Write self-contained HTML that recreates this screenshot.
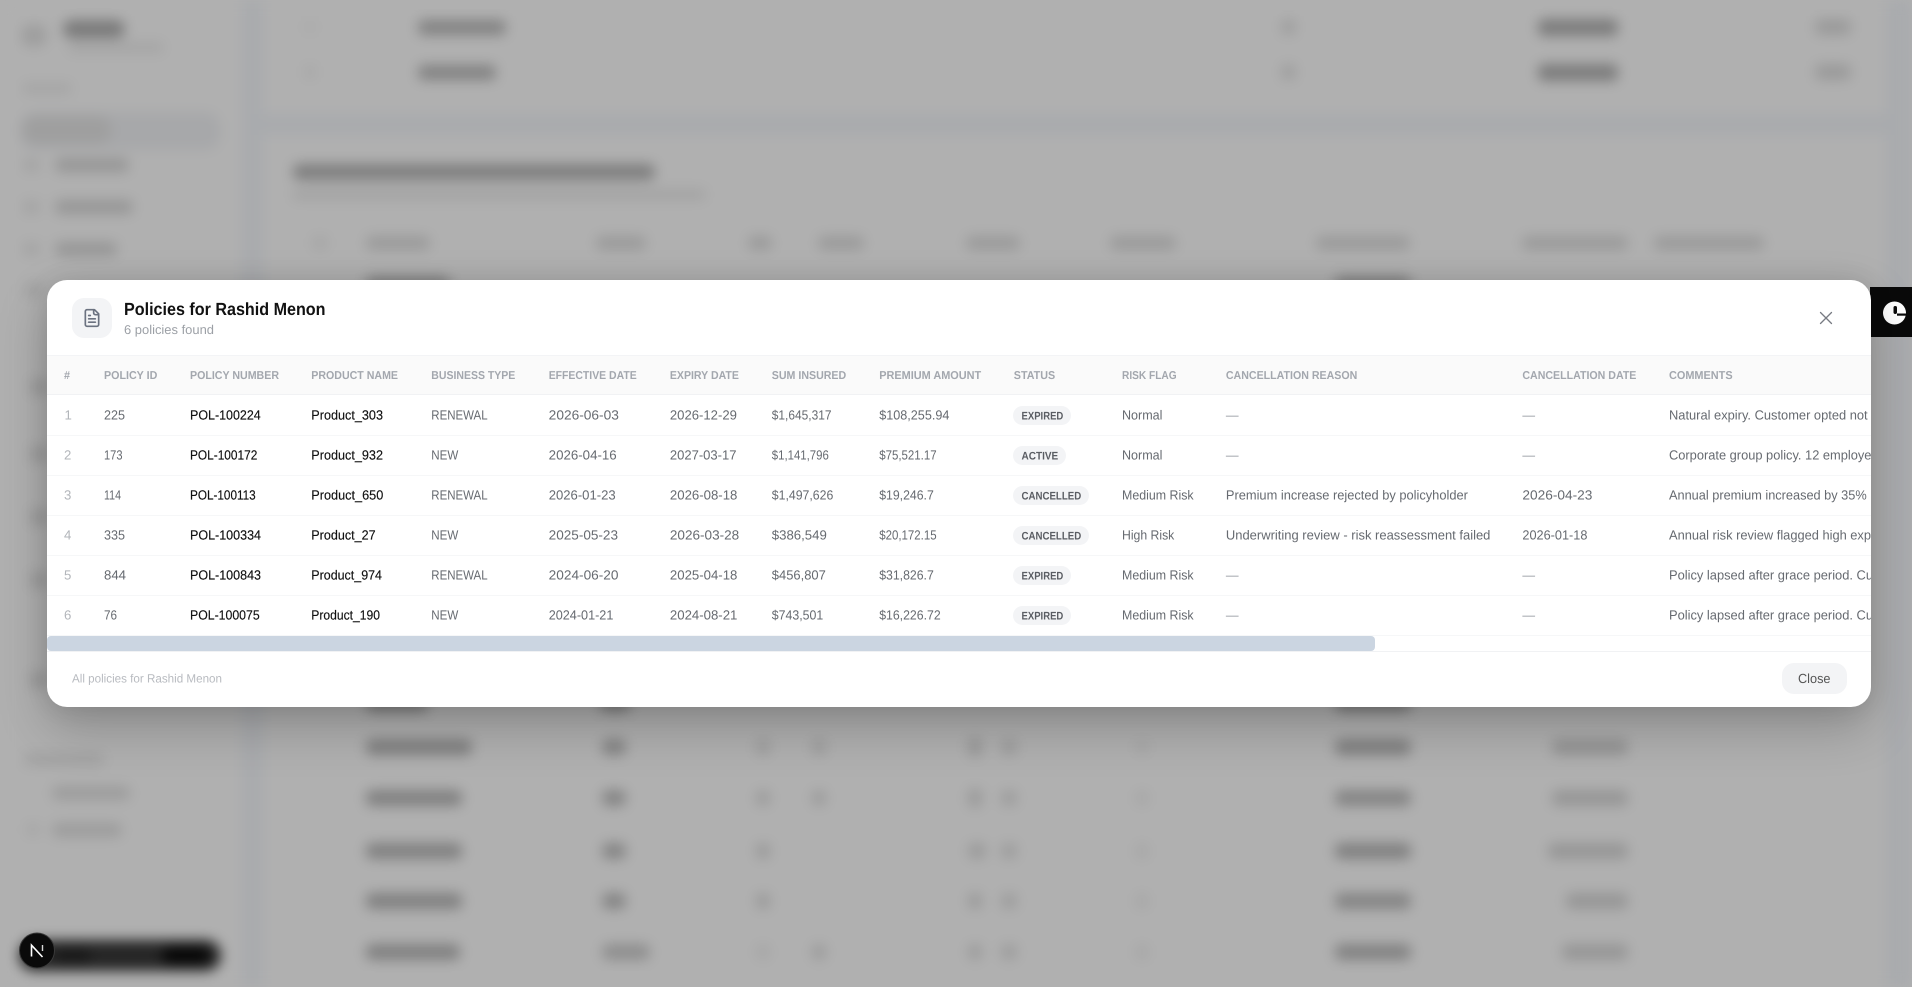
<!DOCTYPE html>
<html lang="en">
<head>
<meta charset="utf-8">
<title>Policies for Rashid Menon</title>
<style>
html,body{margin:0;padding:0;width:1912px;height:987px;overflow:hidden;background:#b0b0b0;font-family:"Liberation Sans",sans-serif}
.bgwrap{position:absolute;left:0;top:0;width:1912px;height:987px;overflow:hidden;background:#b0b0b0}
.bg{position:absolute;left:0;top:0;width:1912px;height:987px;filter:blur(6.5px)}
.tab{position:absolute;left:1870px;top:287px;width:42px;height:50px;background:#0a0a0a}
.modal{position:absolute;left:47px;top:280px;width:1824px;height:427px;background:#fff;border-radius:20px;overflow:hidden;box-shadow:0 20px 50px rgba(0,0,0,.22),0 0 24px rgba(0,0,0,.1)}
.ico{position:absolute;left:25px;top:18px;width:40px;height:40px;border-radius:12px;background:#f3f4f6}
.thead{position:absolute;left:0;top:75px;width:1824px;height:40px;background:#fafafa;box-sizing:border-box;border-top:1px solid #f3f4f6;border-bottom:1px solid #f1f2f4}
.line{position:absolute;left:0;width:1824px;height:1px;background:#f6f7f8}
.thumb{position:absolute;left:0;top:356px;width:1328px;height:15px;background:#cbd5e1;border-radius:4px}
.foot{position:absolute;left:0;top:371px;width:1824px;height:1px;background:#f1f2f4}
.btn{position:absolute;left:1734.500px;top:383px;width:65px;height:31px;background:#f3f4f6;border-radius:12px}
.pill{position:absolute;height:19px;border-radius:10px;background:#f3f4f6}
svg.txt{position:absolute;left:0;top:0;width:1912px;height:987px}
text{font-family:"Liberation Sans",sans-serif;text-rendering:geometricPrecision}
.h{font-size:11.4px;font-weight:700;fill:#a3a7ae}
.n{font-size:13.2px;fill:#b2b5ba}
.g{font-size:13.2px;fill:#666a70}
.k{font-size:13.2px;fill:#111;stroke:#111;stroke-width:.15px}
.d{font-size:13.2px;fill:#9a9da3}
.b{font-size:11px;font-weight:700;fill:#5a5d63}
</style>
</head>
<body>
<div class="bgwrap">
<svg class="bg" viewBox="0 0 1912 987" xmlns="http://www.w3.org/2000/svg">
  <rect x="-30" y="-30" width="1972" height="1047" fill="#b0b0b0"/>
  <rect x="242" y="-30" width="21" height="1047" fill="#a9abae"/>
  <rect x="1886" y="-30" width="56" height="1047" fill="#a9abae"/>
  <rect x="263" y="114" width="1623" height="21" fill="#a9abae"/>
  <g fill="#9e9e9e">
    <rect x="21" y="24" width="26" height="23" rx="11"/>
    <rect x="63" y="20" width="62" height="18" rx="9" fill="#7a7a7a"/>
    <rect x="68" y="42" width="96" height="11" rx="5" fill="#a5a5a5"/>
    <rect x="22" y="83" width="50" height="11" rx="5" fill="#a5a5a5"/>
    <rect x="20" y="112" width="200" height="38" rx="14" fill="#a7a8aa"/>
    <rect x="22" y="116" width="90" height="28" rx="14" fill="#9f9f9f"/>
    <rect x="23" y="158" width="17" height="14" rx="5" fill="#a4a4a4"/>
    <rect x="55" y="158" width="74" height="14" rx="6" fill="#969696"/>
    <rect x="23" y="200" width="17" height="14" rx="5" fill="#a4a4a4"/>
    <rect x="55" y="200" width="78" height="14" rx="6" fill="#969696"/>
    <rect x="23" y="242" width="17" height="14" rx="5" fill="#a4a4a4"/>
    <rect x="55" y="242" width="62" height="14" rx="6" fill="#969696"/>
    <rect x="25" y="283" width="18" height="14" rx="6" fill="#a0a0a0"/>
    <rect x="30" y="378" width="18" height="18" rx="8" fill="#9c9c9c"/>
    <rect x="30" y="445" width="18" height="18" rx="8" fill="#9c9c9c"/>
    <rect x="30" y="508" width="18" height="18" rx="8" fill="#9c9c9c"/>
    <rect x="30" y="571" width="18" height="18" rx="8" fill="#9c9c9c"/>
    <rect x="30" y="671" width="18" height="18" rx="8" fill="#9c9c9c"/>
    <rect x="24" y="753" width="80" height="13" rx="5" fill="#a2a2a2"/>
    <rect x="52" y="786" width="78" height="14" rx="6" fill="#9c9c9c"/>
    <rect x="26" y="823" width="14" height="13" rx="5" fill="#a6a6a6"/>
    <rect x="52" y="823" width="70" height="14" rx="6" fill="#9c9c9c"/>
  </g>
  <rect x="19" y="940" width="202" height="31" rx="15" fill="#262626"/>
  <rect x="162" y="946" width="48" height="19" rx="9" fill="#080808"/>
  <rect x="55" y="948" width="36" height="16" rx="8" fill="#1a1a1a"/>
  <g fill="#828282">
    <rect x="418" y="20" width="88" height="15" rx="6"/><rect x="418" y="65" width="78" height="15" rx="6"/>
    <rect x="1281" y="19" width="15" height="16" rx="7" fill="#9e9e9e"/><rect x="1281" y="64" width="15" height="16" rx="7" fill="#9e9e9e"/>
    <rect x="1538" y="19" width="80" height="17" rx="6" fill="#7c7c7c"/><rect x="1538" y="64" width="80" height="17" rx="6" fill="#7c7c7c"/>
    <rect x="1815" y="19" width="36" height="16" rx="6" fill="#9a9a9a"/><rect x="1815" y="64" width="36" height="16" rx="6" fill="#9a9a9a"/>
    <rect x="305" y="20" width="10" height="14" rx="5" fill="#aaa"/><rect x="305" y="65" width="10" height="14" rx="5" fill="#a6a6a6"/>
    <rect x="293" y="164" width="362" height="16" rx="7" fill="#7e7e7e"/>
    <rect x="292" y="189" width="414" height="11" rx="5" fill="#a3a3a3"/>
  </g>
  <g fill="#9a9a9a">
    <rect x="312" y="236" width="16" height="14" rx="6" fill="#a6a6a6"/>
    <rect x="366" y="236" width="64" height="14" rx="6"/>
    <rect x="596" y="236" width="50" height="14" rx="6"/>
    <rect x="748" y="236" width="24" height="14" rx="6"/>
    <rect x="818" y="236" width="46" height="14" rx="6"/>
    <rect x="966" y="236" width="54" height="14" rx="6"/>
    <rect x="1110" y="236" width="66" height="14" rx="6"/>
    <rect x="1316" y="236" width="94" height="14" rx="6"/>
    <rect x="1522" y="236" width="106" height="14" rx="6"/>
    <rect x="1654" y="236" width="110" height="14" rx="6"/>
    <rect x="366" y="276" width="84" height="16" rx="6" fill="#848484"/>
    <rect x="1335" y="276" width="76" height="16" rx="6" fill="#848484"/>
  </g>
  <g id="rows">
    <rect x="366" y="696" width="62" height="16" rx="6" fill="#808080"/><rect x="600" y="696" width="30" height="16" rx="6" fill="#808080"/>
    <rect x="1335" y="696" width="76" height="16" rx="6" fill="#808080"/>
    <rect x="366" y="739" width="106" height="16" rx="6" fill="#808080"/><rect x="602" y="739" width="24" height="16" rx="7" fill="#848484"/><rect x="756" y="739" width="14" height="16" rx="7" fill="#9c9c9c"/><rect x="812" y="739" width="14" height="16" rx="7" fill="#9c9c9c"/><rect x="968" y="737" width="14" height="20" rx="7" fill="#989898"/><rect x="1001" y="739" width="16" height="16" rx="7" fill="#9c9c9c"/><rect x="1136" y="740" width="12" height="14" rx="6" fill="#a6a6a6"/><rect x="1335" y="739" width="76" height="16" rx="6" fill="#808080"/><rect x="1552" y="739" width="76" height="16" rx="6" fill="#949494"/>
    <rect x="366" y="790" width="96" height="16" rx="6" fill="#808080"/><rect x="602" y="790" width="24" height="16" rx="7" fill="#848484"/><rect x="756" y="790" width="14" height="16" rx="7" fill="#9a9a9a"/><rect x="812" y="790" width="14" height="16" rx="7" fill="#9a9a9a"/><rect x="968" y="788" width="14" height="20" rx="7" fill="#9a9a9a"/><rect x="1001" y="790" width="16" height="16" rx="7" fill="#9c9c9c"/><rect x="1136" y="790" width="12" height="16" rx="6" fill="#a6a6a6"/><rect x="1335" y="790" width="76" height="16" rx="6" fill="#848484"/><rect x="1552" y="790" width="76" height="16" rx="6" fill="#969696"/>
    <rect x="366" y="843" width="96" height="16" rx="6" fill="#808080"/><rect x="602" y="843" width="24" height="16" rx="7" fill="#848484"/><rect x="756" y="843" width="14" height="16" rx="7" fill="#989898"/><rect x="968" y="843" width="18" height="16" rx="7" fill="#9a9a9a"/><rect x="1001" y="843" width="16" height="16" rx="7" fill="#9c9c9c"/><rect x="1136" y="843" width="12" height="16" rx="6" fill="#a6a6a6"/><rect x="1335" y="843" width="76" height="16" rx="6" fill="#808080"/><rect x="1548" y="843" width="80" height="16" rx="6" fill="#969696"/>
    <rect x="366" y="893" width="96" height="16" rx="6" fill="#808080"/><rect x="602" y="893" width="24" height="16" rx="7" fill="#848484"/><rect x="756" y="893" width="14" height="16" rx="7" fill="#989898"/><rect x="968" y="893" width="14" height="16" rx="7" fill="#989898"/><rect x="1001" y="893" width="16" height="16" rx="7" fill="#9c9c9c"/><rect x="1136" y="893" width="12" height="16" rx="6" fill="#a6a6a6"/><rect x="1335" y="893" width="76" height="16" rx="6" fill="#848484"/><rect x="1566" y="893" width="62" height="16" rx="6" fill="#969696"/>
    <rect x="366" y="944" width="94" height="16" rx="6" fill="#808080"/><rect x="602" y="944" width="48" height="16" rx="7" fill="#8e8e8e"/><rect x="756" y="944" width="14" height="16" rx="7" fill="#a6a6a6"/><rect x="812" y="944" width="14" height="16" rx="7" fill="#9a9a9a"/><rect x="968" y="944" width="14" height="16" rx="7" fill="#9a9a9a"/><rect x="1001" y="944" width="16" height="16" rx="7" fill="#9c9c9c"/><rect x="1136" y="944" width="12" height="16" rx="6" fill="#a6a6a6"/><rect x="1335" y="944" width="76" height="16" rx="6" fill="#828282"/><rect x="1562" y="944" width="66" height="16" rx="6" fill="#969696"/>
  </g>
</svg>
</div>

<svg style="position:absolute;left:19px;top:932px" width="37" height="37" viewBox="0 0 37 37" xmlns="http://www.w3.org/2000/svg">
  <circle cx="18" cy="18.500" r="17.500" fill="#0a0a0a" stroke="#3a3a3a" stroke-width="1"/>
  <path d="M12.500 24.500V13.200L23.500 25" fill="none" stroke="#fff" stroke-width="1.600"/>
  <path d="M23.500 13V19" fill="none" stroke="#d8d8d8" stroke-width="1.400"/>
</svg>

<div class="tab">
  <svg width="42" height="50" viewBox="0 0 42 50" xmlns="http://www.w3.org/2000/svg">
    <circle cx="24.500" cy="26" r="11.500" fill="#fff"/>
    <rect x="23.500" y="19" width="3.500" height="8" rx="1.700" fill="#0a0a0a"/>
    <rect x="27" y="26.500" width="10" height="2.200" fill="#0a0a0a"/>
  </svg>
</div>

<div class="modal">
  <div class="ico"></div>
  <div class="thead"></div>
  <div class="line" style="top:155px"></div>
  <div class="line" style="top:195px"></div>
  <div class="line" style="top:235px"></div>
  <div class="line" style="top:275px"></div>
  <div class="line" style="top:315px"></div>
  <div class="line" style="top:355px"></div>
  <div class="thumb"></div>
  <div class="foot"></div>
  <div class="btn"></div>
  <div class="pill" style="left:966px;top:126px;width:58px"></div>
  <div class="pill" style="left:966px;top:166px;width:53px"></div>
  <div class="pill" style="left:966px;top:206px;width:76px"></div>
  <div class="pill" style="left:966px;top:246px;width:76px"></div>
  <div class="pill" style="left:966px;top:286px;width:58px"></div>
  <div class="pill" style="left:966px;top:326px;width:58px"></div>
</div>

<svg class="txt" viewBox="0 0 1912 987" xmlns="http://www.w3.org/2000/svg">
  <defs><clipPath id="mc"><rect x="47" y="280" width="1824" height="427"/></clipPath></defs>
  <g transform="translate(82 308) scale(.8333)" fill="none" stroke="#6b7280" stroke-width="2" stroke-linecap="round" stroke-linejoin="round">
    <path d="M15 2H6a2 2 0 0 0-2 2v16a2 2 0 0 0 2 2h12a2 2 0 0 0 2-2V7Z"/>
    <path d="M14 2v4a2 2 0 0 0 2 2h4"/>
    <path d="M10 9H8"/><path d="M16 13H8"/><path d="M16 17H8"/>
  </g>
  <path d="M1820.500 312.500L1831.500 323.500M1831.500 312.500L1820.500 323.500" stroke="#777b82" stroke-width="1.300" stroke-linecap="round" fill="none"/>

  <text x="124" y="314.800" font-size="17.600" font-weight="700" fill="#111" textLength="201.500" lengthAdjust="spacingAndGlyphs">Policies for Rashid Menon</text>
  <text x="124" y="334" font-size="12.800" fill="#9ca0a6" textLength="90" lengthAdjust="spacingAndGlyphs">6 policies found</text>
  <text x="72" y="682.300" font-size="12" fill="#b8bbc0" textLength="150" lengthAdjust="spacingAndGlyphs">All policies for Rashid Menon</text>
  <text x="1798" y="683" font-size="13.200" fill="#555" textLength="32.500" lengthAdjust="spacingAndGlyphs">Close</text>

  <g class="hdr">
    <text class="h" x="64" y="378.800" textLength="6" lengthAdjust="spacingAndGlyphs">#</text>
    <text class="h" x="104" y="378.800" textLength="53.300" lengthAdjust="spacingAndGlyphs">POLICY ID</text>
    <text class="h" x="190" y="378.800" textLength="89" lengthAdjust="spacingAndGlyphs">POLICY NUMBER</text>
    <text class="h" x="311.300" y="378.800" textLength="86.700" lengthAdjust="spacingAndGlyphs">PRODUCT NAME</text>
    <text class="h" x="431.300" y="378.800" textLength="84" lengthAdjust="spacingAndGlyphs">BUSINESS TYPE</text>
    <text class="h" x="548.700" y="378.800" textLength="88" lengthAdjust="spacingAndGlyphs">EFFECTIVE DATE</text>
    <text class="h" x="669.900" y="378.800" textLength="69" lengthAdjust="spacingAndGlyphs">EXPIRY DATE</text>
    <text class="h" x="771.800" y="378.800" textLength="74.400" lengthAdjust="spacingAndGlyphs">SUM INSURED</text>
    <text class="h" x="879.200" y="378.800" textLength="102" lengthAdjust="spacingAndGlyphs">PREMIUM AMOUNT</text>
    <text class="h" x="1013.800" y="378.800" textLength="41.300" lengthAdjust="spacingAndGlyphs">STATUS</text>
    <text class="h" x="1122" y="378.800" textLength="54.600" lengthAdjust="spacingAndGlyphs">RISK FLAG</text>
    <text class="h" x="1225.900" y="378.800" textLength="131.400" lengthAdjust="spacingAndGlyphs">CANCELLATION REASON</text>
    <text class="h" x="1522.400" y="378.800" textLength="114" lengthAdjust="spacingAndGlyphs">CANCELLATION DATE</text>
    <text class="h" x="1669" y="378.800" textLength="63.600" lengthAdjust="spacingAndGlyphs">COMMENTS</text>
  </g>

  <g clip-path="url(#mc)">
    <!-- row 1 -->
    <text class="n" x="64.500" y="419.500">1</text>
    <text class="g" x="104" y="419.500" textLength="21" lengthAdjust="spacingAndGlyphs">225</text>
    <text class="k" x="190" y="419.500" textLength="70.700" lengthAdjust="spacingAndGlyphs">POL-100224</text>
    <text class="k" x="311.300" y="419.500" textLength="71.700" lengthAdjust="spacingAndGlyphs">Product_303</text>
    <text class="g" x="431.300" y="419.500" textLength="56.300" lengthAdjust="spacingAndGlyphs">RENEWAL</text>
    <text class="g" x="548.700" y="419.500" textLength="70.200" lengthAdjust="spacingAndGlyphs">2026-06-03</text>
    <text class="g" x="669.900" y="419.500" textLength="67" lengthAdjust="spacingAndGlyphs">2026-12-29</text>
    <text class="g" x="771.800" y="419.500" textLength="59.700" lengthAdjust="spacingAndGlyphs">$1,645,317</text>
    <text class="g" x="879.200" y="419.500" textLength="70.200" lengthAdjust="spacingAndGlyphs">$108,255.94</text>
    <text class="b" x="1021.500" y="419.300" textLength="41.800" lengthAdjust="spacingAndGlyphs">EXPIRED</text>
    <text class="g" x="1122" y="419.500" textLength="40.400" lengthAdjust="spacingAndGlyphs">Normal</text>
    <text class="d" x="1225.900" y="419.500" textLength="12.700" lengthAdjust="spacingAndGlyphs">—</text>
    <text class="d" x="1522.400" y="419.500" textLength="12.700" lengthAdjust="spacingAndGlyphs">—</text>
    <text class="g" x="1669" y="419.500" textLength="198.600" lengthAdjust="spacingAndGlyphs">Natural expiry. Customer opted not</text>
    <!-- row 2 -->
    <text class="n" x="64" y="459.500">2</text>
    <text class="g" x="104" y="459.500" textLength="18.500" lengthAdjust="spacingAndGlyphs">173</text>
    <text class="k" x="190" y="459.500" textLength="67.300" lengthAdjust="spacingAndGlyphs">POL-100172</text>
    <text class="k" x="311.300" y="459.500" textLength="71.700" lengthAdjust="spacingAndGlyphs">Product_932</text>
    <text class="g" x="431.300" y="459.500" textLength="27" lengthAdjust="spacingAndGlyphs">NEW</text>
    <text class="g" x="548.700" y="459.500" textLength="68" lengthAdjust="spacingAndGlyphs">2026-04-16</text>
    <text class="g" x="669.900" y="459.500" textLength="66.600" lengthAdjust="spacingAndGlyphs">2027-03-17</text>
    <text class="g" x="771.800" y="459.500" textLength="57" lengthAdjust="spacingAndGlyphs">$1,141,796</text>
    <text class="g" x="879.200" y="459.500" textLength="57.400" lengthAdjust="spacingAndGlyphs">$75,521.17</text>
    <text class="b" x="1021.500" y="459.300" textLength="36.700" lengthAdjust="spacingAndGlyphs">ACTIVE</text>
    <text class="g" x="1122" y="459.500" textLength="40.400" lengthAdjust="spacingAndGlyphs">Normal</text>
    <text class="d" x="1225.900" y="459.500" textLength="12.700" lengthAdjust="spacingAndGlyphs">—</text>
    <text class="d" x="1522.400" y="459.500" textLength="12.700" lengthAdjust="spacingAndGlyphs">—</text>
    <text class="g" x="1669" y="459.500" textLength="216" lengthAdjust="spacingAndGlyphs">Corporate group policy. 12 employees</text>
    <!-- row 3 -->
    <text class="n" x="64" y="499.500">3</text>
    <text class="g" x="104" y="499.500" textLength="17" lengthAdjust="spacingAndGlyphs">114</text>
    <text class="k" x="190" y="499.500" textLength="65.700" lengthAdjust="spacingAndGlyphs">POL-100113</text>
    <text class="k" x="311.300" y="499.500" textLength="72" lengthAdjust="spacingAndGlyphs">Product_650</text>
    <text class="g" x="431.300" y="499.500" textLength="56.300" lengthAdjust="spacingAndGlyphs">RENEWAL</text>
    <text class="g" x="548.700" y="499.500" textLength="67" lengthAdjust="spacingAndGlyphs">2026-01-23</text>
    <text class="g" x="669.900" y="499.500" textLength="67.500" lengthAdjust="spacingAndGlyphs">2026-08-18</text>
    <text class="g" x="771.800" y="499.500" textLength="61.500" lengthAdjust="spacingAndGlyphs">$1,497,626</text>
    <text class="g" x="879.200" y="499.500" textLength="54.600" lengthAdjust="spacingAndGlyphs">$19,246.7</text>
    <text class="b" x="1021.500" y="499.300" textLength="59.700" lengthAdjust="spacingAndGlyphs">CANCELLED</text>
    <text class="g" x="1122" y="499.500" textLength="71.600" lengthAdjust="spacingAndGlyphs">Medium Risk</text>
    <text class="g" x="1225.900" y="499.500" textLength="242" lengthAdjust="spacingAndGlyphs">Premium increase rejected by policyholder</text>
    <text class="g" x="1522.400" y="499.500" textLength="70" lengthAdjust="spacingAndGlyphs">2026-04-23</text>
    <text class="g" x="1669" y="499.500" textLength="197.700" lengthAdjust="spacingAndGlyphs">Annual premium increased by 35%</text>
    <!-- row 4 -->
    <text class="n" x="64" y="539.500">4</text>
    <text class="g" x="104" y="539.500" textLength="21" lengthAdjust="spacingAndGlyphs">335</text>
    <text class="k" x="190" y="539.500" textLength="71" lengthAdjust="spacingAndGlyphs">POL-100334</text>
    <text class="k" x="311.300" y="539.500" textLength="64.300" lengthAdjust="spacingAndGlyphs">Product_27</text>
    <text class="g" x="431.300" y="539.500" textLength="27" lengthAdjust="spacingAndGlyphs">NEW</text>
    <text class="g" x="548.700" y="539.500" textLength="69.300" lengthAdjust="spacingAndGlyphs">2025-05-23</text>
    <text class="g" x="669.900" y="539.500" textLength="69.300" lengthAdjust="spacingAndGlyphs">2026-03-28</text>
    <text class="g" x="771.800" y="539.500" textLength="55" lengthAdjust="spacingAndGlyphs">$386,549</text>
    <text class="g" x="879.200" y="539.500" textLength="57.400" lengthAdjust="spacingAndGlyphs">$20,172.15</text>
    <text class="b" x="1021.500" y="539.300" textLength="59.700" lengthAdjust="spacingAndGlyphs">CANCELLED</text>
    <text class="g" x="1122" y="539.500" textLength="52.300" lengthAdjust="spacingAndGlyphs">High Risk</text>
    <text class="g" x="1225.900" y="539.500" textLength="264.500" lengthAdjust="spacingAndGlyphs">Underwriting review - risk reassessment failed</text>
    <text class="g" x="1522.400" y="539.500" textLength="65" lengthAdjust="spacingAndGlyphs">2026-01-18</text>
    <text class="g" x="1669" y="539.500" textLength="202" lengthAdjust="spacingAndGlyphs">Annual risk review flagged high exp</text>
    <!-- row 5 -->
    <text class="n" x="64" y="579.500">5</text>
    <text class="g" x="104" y="579.500" textLength="22" lengthAdjust="spacingAndGlyphs">844</text>
    <text class="k" x="190" y="579.500" textLength="71" lengthAdjust="spacingAndGlyphs">POL-100843</text>
    <text class="k" x="311.300" y="579.500" textLength="70.700" lengthAdjust="spacingAndGlyphs">Product_974</text>
    <text class="g" x="431.300" y="579.500" textLength="56.300" lengthAdjust="spacingAndGlyphs">RENEWAL</text>
    <text class="g" x="548.700" y="579.500" textLength="69.800" lengthAdjust="spacingAndGlyphs">2024-06-20</text>
    <text class="g" x="669.900" y="579.500" textLength="67.500" lengthAdjust="spacingAndGlyphs">2025-04-18</text>
    <text class="g" x="771.800" y="579.500" textLength="54" lengthAdjust="spacingAndGlyphs">$456,807</text>
    <text class="g" x="879.200" y="579.500" textLength="54.600" lengthAdjust="spacingAndGlyphs">$31,826.7</text>
    <text class="b" x="1021.500" y="579.300" textLength="41.800" lengthAdjust="spacingAndGlyphs">EXPIRED</text>
    <text class="g" x="1122" y="579.500" textLength="71.600" lengthAdjust="spacingAndGlyphs">Medium Risk</text>
    <text class="d" x="1225.900" y="579.500" textLength="12.700" lengthAdjust="spacingAndGlyphs">—</text>
    <text class="d" x="1522.400" y="579.500" textLength="12.700" lengthAdjust="spacingAndGlyphs">—</text>
    <text class="g" x="1669" y="579.500" textLength="204" lengthAdjust="spacingAndGlyphs">Policy lapsed after grace period. Cu</text>
    <!-- row 6 -->
    <text class="n" x="64" y="619.500">6</text>
    <text class="g" x="104" y="619.500" textLength="13" lengthAdjust="spacingAndGlyphs">76</text>
    <text class="k" x="190" y="619.500" textLength="69.700" lengthAdjust="spacingAndGlyphs">POL-100075</text>
    <text class="k" x="311.300" y="619.500" textLength="68.700" lengthAdjust="spacingAndGlyphs">Product_190</text>
    <text class="g" x="431.300" y="619.500" textLength="27" lengthAdjust="spacingAndGlyphs">NEW</text>
    <text class="g" x="548.700" y="619.500" textLength="64.700" lengthAdjust="spacingAndGlyphs">2024-01-21</text>
    <text class="g" x="669.900" y="619.500" textLength="67.500" lengthAdjust="spacingAndGlyphs">2024-08-21</text>
    <text class="g" x="771.800" y="619.500" textLength="51.400" lengthAdjust="spacingAndGlyphs">$743,501</text>
    <text class="g" x="879.200" y="619.500" textLength="61.500" lengthAdjust="spacingAndGlyphs">$16,226.72</text>
    <text class="b" x="1021.500" y="619.300" textLength="41.800" lengthAdjust="spacingAndGlyphs">EXPIRED</text>
    <text class="g" x="1122" y="619.500" textLength="71.600" lengthAdjust="spacingAndGlyphs">Medium Risk</text>
    <text class="d" x="1225.900" y="619.500" textLength="12.700" lengthAdjust="spacingAndGlyphs">—</text>
    <text class="d" x="1522.400" y="619.500" textLength="12.700" lengthAdjust="spacingAndGlyphs">—</text>
    <text class="g" x="1669" y="619.500" textLength="204" lengthAdjust="spacingAndGlyphs">Policy lapsed after grace period. Cu</text>
  </g>
</svg>
</body>
</html>
